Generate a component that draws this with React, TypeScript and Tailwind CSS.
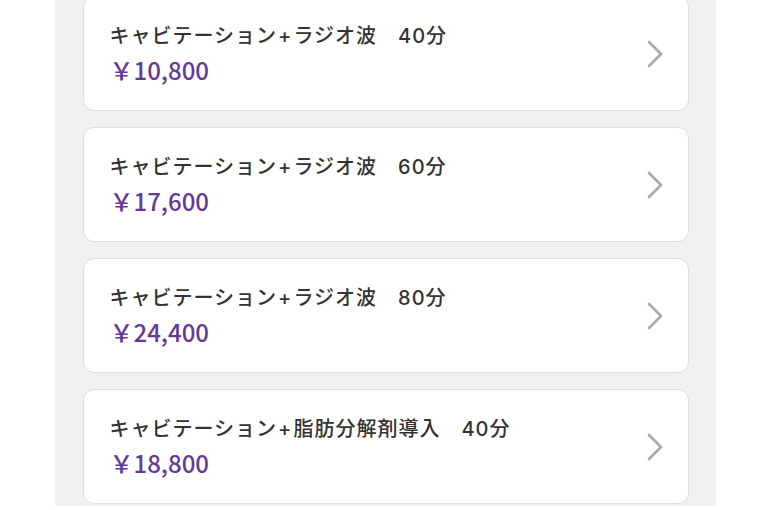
const menus = [
  { name: "キャビテーション+ラジオ波　40分", price: "￥10,800" },
  { name: "キャビテーション+ラジオ波　60分", price: "￥17,600" },
  { name: "キャビテーション+ラジオ波　80分", price: "￥24,400" },
  { name: "キャビテーション+脂肪分解剤導入　40分", price: "￥18,800" },
];

function Chevron() {
  return (
    <svg width="16" height="28" viewBox="0 0 16 28" fill="none">
      <polyline
        points="2,2 14,14 2,26"
        stroke="#a9a9a9"
        strokeWidth="2.6"
        strokeLinecap="round"
        strokeLinejoin="round"
      />
    </svg>
  );
}

export default function App() {
  return (
    <div
      className="h-[510px] w-full overflow-hidden bg-white"
      style={{ fontFamily: '"Noto Sans CJK JP", "Noto Sans", sans-serif' }}
    >
      <div className="mx-auto h-full w-[661px] bg-[#f2f1f0] pl-[28px] pr-[27px]">
        <ul className="-mt-1 flex flex-col gap-4">
          {menus.map((m) => {
            const [left, right] = m.name.split("+");
            return (
              <li
                key={m.name}
                className="flex h-[115px] items-center justify-between rounded-[11px] border border-[#dedede] bg-white pl-[26px] pr-[25px]"
              >
                <div className="flex flex-col gap-[4px]">
                  <p className="mt-[1px] font-['Inter','Noto_Sans_CJK_JP',sans-serif] text-[20px] font-medium leading-[27px] tracking-[0.05em] text-[#333333]">
                    {left}
                    <span className="mx-[1px]">+</span>
                    {right}
                  </p>
                  <p className="text-[24px] font-medium leading-[32px] text-[#65389a]">
                    {m.price}
                  </p>
                </div>
                <Chevron />
              </li>
            );
          })}
        </ul>
      </div>
    </div>
  );
}
